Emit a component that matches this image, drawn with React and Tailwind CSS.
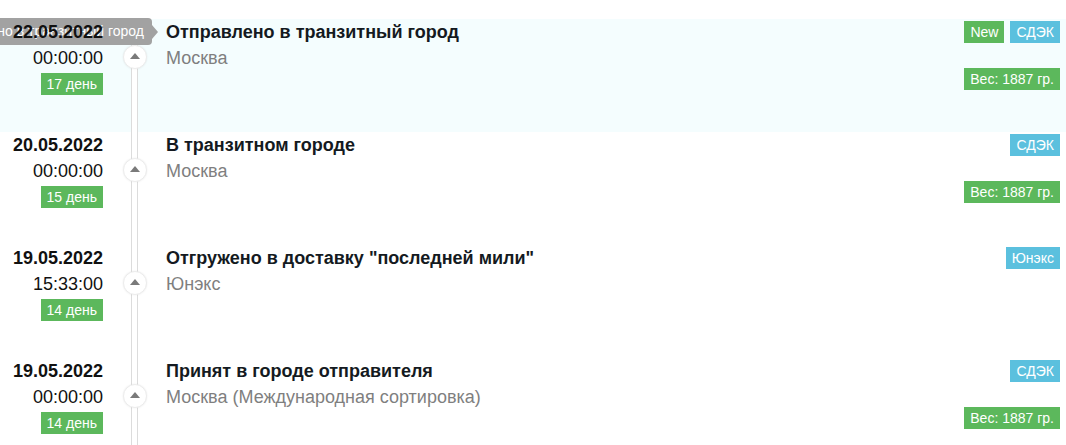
import React from 'react';

const events = [
  {
    date: '22.05.2022',
    time: '00:00:00',
    days: '17 день',
    title: 'Отправлено в транзитный город',
    place: 'Москва',
    tags: ['New', 'СДЭК'],
    weight: 'Вес: 1887 гр.',
    active: true,
  },
  {
    date: '20.05.2022',
    time: '00:00:00',
    days: '15 день',
    title: 'В транзитном городе',
    place: 'Москва',
    tags: ['СДЭК'],
    weight: 'Вес: 1887 гр.',
  },
  {
    date: '19.05.2022',
    time: '15:33:00',
    days: '14 день',
    title: 'Отгружено в доставку "последней мили"',
    place: 'Юнэкс',
    tags: ['Юнэкс'],
  },
  {
    date: '19.05.2022',
    time: '00:00:00',
    days: '14 день',
    title: 'Принят в городе отправителя',
    place: 'Москва (Международная сортировка)',
    tags: ['СДЭК'],
    weight: 'Вес: 1887 гр.',
  },
];

// метка справа: зелёная для New и веса, голубая для службы доставки
function Tag({ children, green }) {
  return (
    <span
      className={
        'inline-block h-[22px] px-[6px] text-[14px] leading-[22px] text-white font-light ' +
        (green ? 'bg-[#5cb85c]' : 'bg-[#5bc0de]')
      }
    >
      {children}
    </span>
  );
}

function Row({ ev }) {
  return (
    <div className={'flex h-[113px] ' + (ev.active ? 'bg-[#f4fdfe]' : '')}>
      {/* дата и время */}
      <div className="w-[103px] shrink-0 flex flex-col items-end text-[18px] leading-[26px] text-[#111]">
        <div className="relative z-10 font-bold">{ev.date}</div>
        <div>{ev.time}</div>
        <span className="mt-[2px] inline-block h-[22px] px-[6px] bg-[#5cb85c] text-white text-[14px] leading-[22px] font-light">
          {ev.days}
        </span>
      </div>

      {/* линия */}
      <div className="w-[63px] shrink-0 relative">
        <div className="absolute left-[28px] top-0 bottom-0 w-[7px] border-x border-[#dcdcdc] bg-white" />
        <div className="absolute left-[20px] top-[26px] w-[24px] h-[24px] rounded-full bg-white border border-[#ececec] shadow-[0_0_2px_rgba(0,0,0,0.08)] flex items-center justify-center">
          <div className="w-0 h-0 border-x-[5px] border-x-transparent border-b-[6px] border-b-[#7a7a7a] mb-[2px]" />
        </div>
      </div>

      {/* описание */}
      <div className="flex-1 text-[18px] leading-[26px]">
        <div className="font-bold text-[#141a21]">{ev.title}</div>
        <div className="text-[#7f7f7f]">{ev.place}</div>
      </div>

      {/* метки */}
      <div className="pr-[6px] pt-[2px] flex flex-col items-end">
        <div className="flex gap-[6px]">
          {ev.tags.map((t) => (
            <Tag key={t} green={t === 'New'}>{t}</Tag>
          ))}
        </div>
        {ev.weight && (
          <div className="mt-[24px]">
            <Tag green>{ev.weight}</Tag>
          </div>
        )}
      </div>
    </div>
  );
}

export default function App() {
  return (
    <div className="w-[1066px] h-[445px] overflow-hidden bg-white font-['Liberation_Sans',Arial,sans-serif] relative">
      <div className="pt-[19px]">
        {events.map((ev, i) => (
          <Row key={i} ev={ev} />
        ))}
      </div>

      {/* всплывающая подсказка */}
      <div className="absolute left-0 top-[18px] flex items-center">
        <div className="w-[152px] h-[27px] overflow-hidden rounded-r-[4px] bg-[#a2a2a2] flex justify-end items-center pr-[8px]">
          <span className="whitespace-nowrap text-white text-[14px]">Отправлено в транзитный город</span>
        </div>
        <div className="w-0 h-0 border-y-[7px] border-y-transparent border-l-[6px] border-l-[#a2a2a2]" />
      </div>
    </div>
  );
}
